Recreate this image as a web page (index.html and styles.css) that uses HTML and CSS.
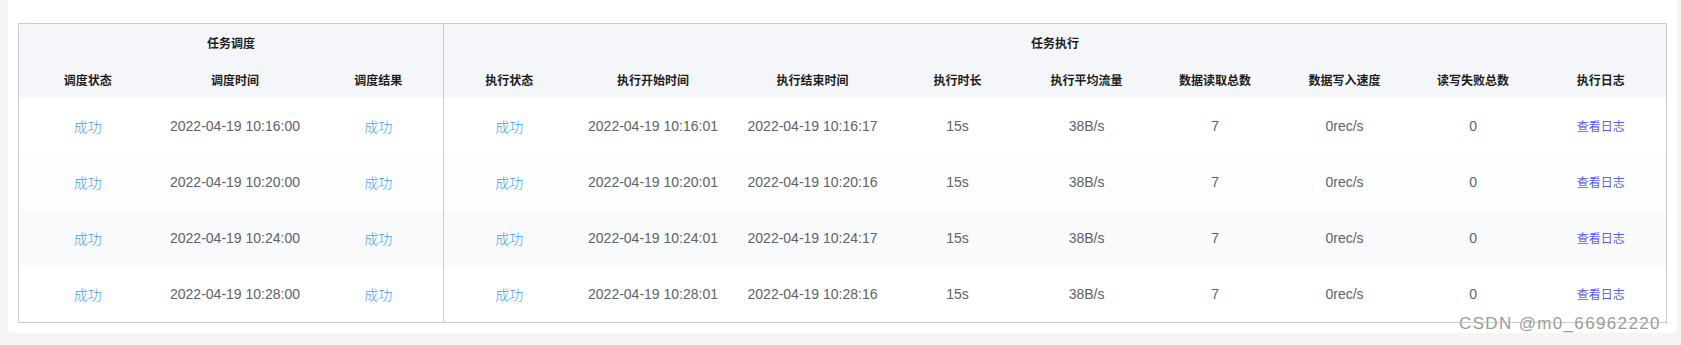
FILE: index.html
```html
<!DOCTYPE html>
<html lang="zh-CN">
<head>
<meta charset="utf-8">
<title>任务执行记录</title>
<link rel="stylesheet" href="styles.css">
</head>
<body>
<div class="page">
  <div class="card">
    <table class="log-table">
      <colgroup>
        <col class="c-status1">
        <col class="c-time1">
        <col class="c-result">
        <col class="c-status2">
        <col class="c-start">
        <col class="c-end">
        <col class="c-dur">
        <col class="c-flow">
        <col class="c-read">
        <col class="c-write">
        <col class="c-fail">
        <col class="c-log">
      </colgroup>
      <thead>
        <tr class="group-row">
          <th colspan="3" class="group-end">任务调度</th>
          <th colspan="9">任务执行</th>
        </tr>
        <tr class="col-row">
          <th>调度状态</th>
          <th>调度时间</th>
          <th class="group-end">调度结果</th>
          <th>执行状态</th>
          <th>执行开始时间</th>
          <th>执行结束时间</th>
          <th>执行时长</th>
          <th>执行平均流量</th>
          <th>数据读取总数</th>
          <th>数据写入速度</th>
          <th>读写失败总数</th>
          <th>执行日志</th>
        </tr>
      </thead>
      <tbody>
        <tr class="row-a">
          <td class="ok">成功</td>
          <td>2022-04-19 10:16:00</td>
          <td class="ok group-end">成功</td>
          <td class="ok">成功</td>
          <td>2022-04-19 10:16:01</td>
          <td>2022-04-19 10:16:17</td>
          <td>15s</td>
          <td>38B/s</td>
          <td>7</td>
          <td>0rec/s</td>
          <td>0</td>
          <td><a class="log-link">查看日志</a></td>
        </tr>
        <tr class="row-b">
          <td class="ok">成功</td>
          <td>2022-04-19 10:20:00</td>
          <td class="ok group-end">成功</td>
          <td class="ok">成功</td>
          <td>2022-04-19 10:20:01</td>
          <td>2022-04-19 10:20:16</td>
          <td>15s</td>
          <td>38B/s</td>
          <td>7</td>
          <td>0rec/s</td>
          <td>0</td>
          <td><a class="log-link">查看日志</a></td>
        </tr>
        <tr class="row-c">
          <td class="ok">成功</td>
          <td>2022-04-19 10:24:00</td>
          <td class="ok group-end">成功</td>
          <td class="ok">成功</td>
          <td>2022-04-19 10:24:01</td>
          <td>2022-04-19 10:24:17</td>
          <td>15s</td>
          <td>38B/s</td>
          <td>7</td>
          <td>0rec/s</td>
          <td>0</td>
          <td><a class="log-link">查看日志</a></td>
        </tr>
        <tr class="row-a">
          <td class="ok">成功</td>
          <td>2022-04-19 10:28:00</td>
          <td class="ok group-end">成功</td>
          <td class="ok">成功</td>
          <td>2022-04-19 10:28:01</td>
          <td>2022-04-19 10:28:16</td>
          <td>15s</td>
          <td>38B/s</td>
          <td>7</td>
          <td>0rec/s</td>
          <td>0</td>
          <td><a class="log-link">查看日志</a></td>
        </tr>
      </tbody>
    </table>
  </div>
  <div class="watermark">CSDN @m0_66962220</div>
</div>
</body>
</html>
```

FILE: styles.css
```css
html, body {
  margin: 0;
  padding: 0;
  background: #f5f5f5;
}

body {
  font-family: "Liberation Sans", "Noto Sans CJK SC", sans-serif;
  width: 1681px;
  height: 345px;
  overflow: hidden;
}

.page {
  position: relative;
  padding: 0 4px 13px 8px;
}

.card {
  background: #ffffff;
  border-radius: 0 0 4px 4px;
  padding: 23px 10px 10px 10px;
  width: 1649px;
}

.log-table {
  width: 1649px;
  border-collapse: collapse;
  table-layout: fixed;
  border: 1px solid #cbcbcb;
}

.c-status1 { width: 138px; }
.c-time1 { width: 157px; }
.c-result { width: 130px; }
.c-status2 { width: 131px; }
.c-start { width: 157px; }
.c-end { width: 162px; }
.c-dur { width: 128px; }
.c-flow { width: 130px; }
.c-read { width: 127px; }
.c-write { width: 132px; }
.c-fail { width: 125px; }

.log-table th {
  background: #f5f6f9;
  font-family: "Noto Sans CJK SC", "Liberation Sans", sans-serif;
  font-size: 12px;
  font-weight: 700;
  color: #1d1d1d;
  text-align: center;
  padding: 0;
  height: 37px;
  line-height: 16px;
}

.log-table td {
  height: 56px;
  padding: 0;
  text-align: center;
  font-size: 14px;
  color: #606266;
  line-height: 18px;
}

.log-table .group-end {
  border-right: 1px solid #cbcbcb;
}

.row-a td { background: #ffffff; }
.row-b td { background: #fdfefe; }
.row-c td { background: #f9fafc; }

.log-table td.ok {
  color: #409eff;
  font-family: "Noto Sans CJK SC", "Liberation Sans", sans-serif;
  font-size: 14px;
  font-weight: 300;
}

.log-link {
  color: #5a62e6;
  font-family: "Noto Sans CJK SC", "Liberation Sans", sans-serif;
  font-size: 12px;
  cursor: pointer;
}

.watermark {
  position: absolute;
  left: 1459px;
  top: 314px;
  font-family: "Liberation Sans", sans-serif;
  font-size: 17px;
  letter-spacing: 1.35px;
  line-height: 20px;
  color: #9a9a9a;
  text-shadow: 0 0 1px #ffffff, 0 0 1px #ffffff;
  white-space: nowrap;
}
```
